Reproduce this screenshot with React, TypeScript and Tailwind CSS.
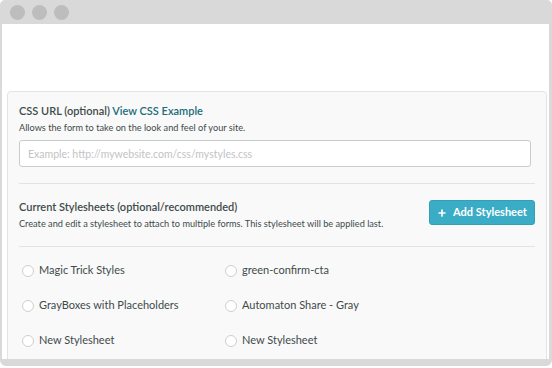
import { Plus } from 'lucide-react';

const stylesheets = [
    'Magic Trick Styles',
    'green-confirm-cta',
    'GrayBoxes with Placeholders',
    'Automaton Share - Gray',
    'New Stylesheet',
    'New Stylesheet',
];

function Radio({ label }: { label: string }) {
    return (
        <label className="flex items-center gap-[5px] h-[35px]">
            <span className="w-[12px] h-[12px] rounded-full border border-[#cfcfcf] bg-white shrink-0" />
            <span className="text-[11px] text-[#3e4b4b] whitespace-nowrap">{label}</span>
        </label>
    );
}

export default function App() {
    return (
        <div className="w-[552px] h-[368px] bg-white overflow-hidden" style={{ fontFamily: 'Lato, "Open Sans", sans-serif' }}>
            <div className="h-[366px] flex flex-col bg-[#d9d9d9] rounded-t-[5px] rounded-b-[6px] pb-[7px] pl-[2px] pr-[3px]">
                <div className="h-[24px] shrink-0 flex items-center gap-[7px] pl-[8px]">
                    <span className="w-[15px] h-[15px] rounded-full bg-[#bdbdbd]" />
                    <span className="w-[15px] h-[15px] rounded-full bg-[#bdbdbd]" />
                    <span className="w-[15px] h-[15px] rounded-full bg-[#bdbdbd]" />
                </div>
                <div className="flex-1 bg-white overflow-hidden pt-[67px] pl-[5px] pr-[2px]">
                    <div className="border border-[#e3e3e3] rounded-[4px] bg-[#f9f9f9] px-[11px] pt-[10px] pb-4">
                        <p className="text-[11px] leading-[18px] font-semibold text-[#3e4b4b] whitespace-nowrap">
                            CSS URL (optional) <a className="text-[#1b6c7b]">View CSS Example</a>
                        </p>
                        <p className="text-[9.2px] leading-[15px] text-[#3e4b4b] whitespace-nowrap">Allows the form to take on the look and feel of your site.</p>
                        <input
                            className="mt-[5px] mr-[4px] block w-[512px] h-[27px] bg-white border border-[#c9cccc] rounded-[3px] px-[8px] text-[10.5px] placeholder:text-[#c2c4c4] outline-none"
                            placeholder="Example: http://mywebsite.com/css/mystyles.css"
                        />
                        <div className="mt-[16px] h-px bg-[#e3e3e3]" />

                        <div className="mt-[16px] flex justify-between items-start">
                            <div className="-mt-[2px] min-w-0">
                                <p className="text-[11px] leading-[18px] font-semibold text-[#3e4b4b] whitespace-nowrap">Current Stylesheets (optional/recommended)</p>
                                <p className="text-[9.2px] leading-[15px] text-[#3e4b4b] whitespace-nowrap">Create and edit a stylesheet to attach to multiple forms. This stylesheet will be applied last.</p>
                            </div>
                            <button className="shrink-0 w-[106px] h-[25px] rounded-[3px] bg-[#3aacc5] border border-[#33a0b8] text-white text-[11px] font-bold flex items-center justify-center gap-[6px] whitespace-nowrap">
                                <Plus size={10} strokeWidth={4} />
                                <span>Add Stylesheet</span>
                            </button>
                        </div>
                        <div className="mt-[15px] h-px bg-[#e3e3e3]" />

                        <div className="mt-[6px] pl-[3px] grid grid-cols-[203px_1fr]">
                            {stylesheets.map((s, i) => (
                                <Radio key={i} label={s} />
                            ))}
                        </div>
                    </div>
                </div>
            </div>
        </div>
    );
}
